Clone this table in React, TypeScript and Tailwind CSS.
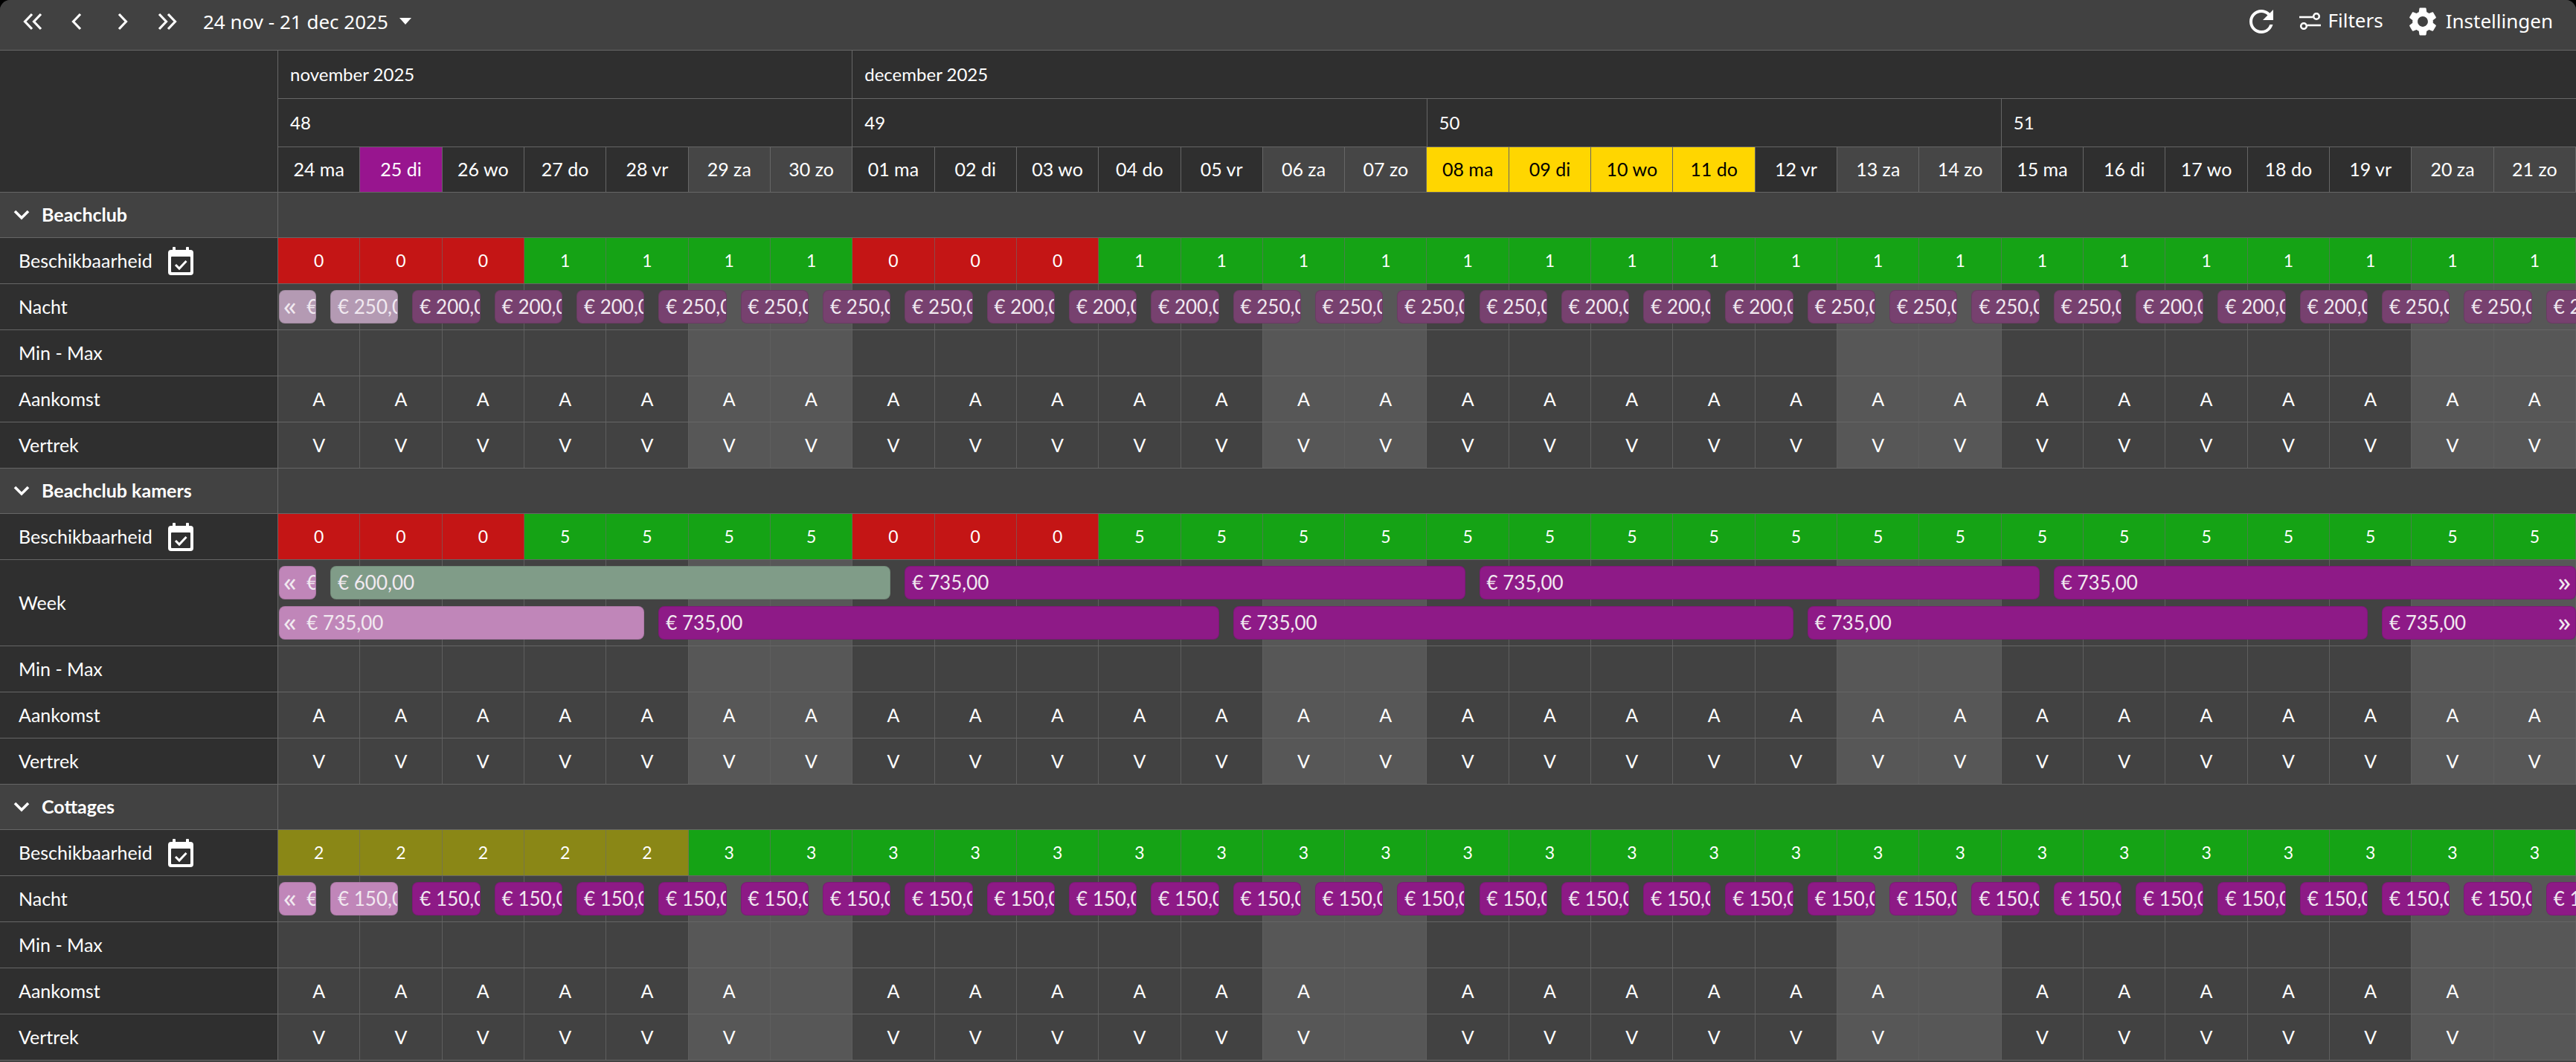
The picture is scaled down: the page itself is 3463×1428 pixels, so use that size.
import type { CSSProperties, ReactNode } from "react";
import { MdRefresh, MdSettings } from "react-icons/md";

const DAYS: [string, string][] = [
  ["24", "ma"], ["25", "di"], ["26", "wo"], ["27", "do"], ["28", "vr"], ["29", "za"], ["30", "zo"],
  ["01", "ma"], ["02", "di"], ["03", "wo"], ["04", "do"], ["05", "vr"], ["06", "za"], ["07", "zo"],
  ["08", "ma"], ["09", "di"], ["10", "wo"], ["11", "do"], ["12", "vr"], ["13", "za"], ["14", "zo"],
  ["15", "ma"], ["16", "di"], ["17", "wo"], ["18", "do"], ["19", "vr"], ["20", "za"], ["21", "zo"],
];

const TODAY = 1;
const HIGHLIGHT = [14, 15, 16, 17];

const isWeekend = (i: number) => DAYS[i][1] === "za" || DAYS[i][1] === "zo";
const isSunday = (i: number) => DAYS[i][1] === "zo";

const nightPrice = (i: number) => {
  const wd = DAYS[((i % 28) + 28) % 28][1];
  return wd === "di" || wd === "wo" || wd === "do" ? "€ 200,00" : "€ 250,00";
};

function Chevron({ dir }: { dir: "left" | "right" }) {
  return (
    <svg width="16" height="24" viewBox="0 0 16 24" fill="none" stroke="white" strokeWidth="3.2">
      {dir === "left" ? <path d="M13 2 L3.5 12 L13 22" /> : <path d="M3 2 L12.5 12 L3 22" />}
    </svg>
  );
}

function DoubleChevron({ dir }: { dir: "left" | "right" }) {
  return (
    <svg width="27" height="24" viewBox="0 0 27 24" fill="none" stroke="white" strokeWidth="3.2">
      {dir === "left" ? (
        <path d="M13 2 L3.5 12 L13 22 M25 2 L15.5 12 L25 22" />
      ) : (
        <path d="M2 2 L11.5 12 L2 22 M14 2 L23.5 12 L14 22" />
      )}
    </svg>
  );
}

function FiltersIcon() {
  return (
    <svg width="29" height="23" viewBox="0 0 29 23" fill="none" stroke="white" strokeWidth="2.6">
      <path d="M0 6 H18" />
      <circle cx="23" cy="5" r="3.8" />
      <circle cx="6" cy="18" r="3.8" />
      <path d="M10.5 17 H29" />
    </svg>
  );
}

function CalendarCheck() {
  return (
    <svg width="34" height="38" viewBox="0 0 34 38">
      <rect x="6" y="0" width="4" height="7" rx="1" fill="white" />
      <rect x="24" y="0" width="4" height="7" rx="1" fill="white" />
      <rect x="0" y="4" width="34" height="34" rx="4" fill="white" />
      <rect x="4" y="13" width="26" height="21" rx="1" fill="#2f2f2f" />
      <path d="M10 24 L15 29 L24.5 19" fill="none" stroke="white" strokeWidth="3" />
    </svg>
  );
}

function ChevronDown() {
  return (
    <svg width="22" height="14" viewBox="0 0 22 14" fill="none" stroke="white" strokeWidth="3.6">
      <path d="M2 2 L11 11 L20 2" />
    </svg>
  );
}

function Toolbar() {
  return (
    <div className="h-[68px] shrink-0 bg-[#414141] rounded-t-[14px] border-b border-[#666] flex items-center justify-between pb-[10px] font-['Noto_Sans',sans-serif] text-white">
      <div className="flex items-center pl-[30px]">
        <DoubleChevron dir="left" />
        <span className="ml-[38px]"><Chevron dir="left" /></span>
        <span className="ml-[46px]"><Chevron dir="right" /></span>
        <span className="ml-[39px]"><DoubleChevron dir="right" /></span>
        <span className="ml-[34px] text-[26px] leading-none">24 nov - 21 dec 2025</span>
        <span className="ml-[15px] w-0 h-0 border-l-[8px] border-r-[8px] border-t-[9px] border-l-transparent border-r-transparent border-t-white" />
      </div>
      <div className="flex items-center pr-[31px]">
        <MdRefresh size={48} />
        <span className="ml-[27px]"><FiltersIcon /></span>
        <span className="ml-[10px] text-[26px] leading-none -mt-[4px]">Filters</span>
        <span className="ml-[30px]"><MdSettings size={46} /></span>
        <span className="ml-[8px] text-[26px] leading-none -mt-[2px]">Instellingen</span>
      </div>
    </div>
  );
}

function Header() {
  return (
    <div className="flex shrink-0">
      <div className="w-[374px] shrink-0 bg-[#2f2f2f] border-r border-b border-[#666]" />
      <div className="flex-1 flex flex-col bg-[#2f2f2f] text-[24px]">
        <div className="h-[65px] grid grid-cols-[repeat(28,minmax(0,1fr))] border-b border-[#666]">
          <div className="col-span-7 flex items-center pl-[16px] border-r border-[#666]">november 2025</div>
          <div className="col-span-21 flex items-center pl-[16px]">december 2025</div>
        </div>
        <div className="h-[65px] grid grid-cols-[repeat(28,minmax(0,1fr))] border-b border-[#666]">
          {["48", "49", "50", "51"].map((w, i) => (
            <div key={w} className={`col-span-7 flex items-center pl-[16px] ${i < 3 ? "border-r border-[#666]" : ""}`}>
              {w}
            </div>
          ))}
        </div>
        <div className="h-[61px] grid grid-cols-[repeat(28,minmax(0,1fr))] border-b border-[#666] text-[25px]">
          {DAYS.map(([d, w], i) => {
            let bg = isWeekend(i) ? "bg-[#464646] text-white" : "bg-[#2f2f2f] text-white";
            if (i === TODAY) bg = "bg-[#98158f] text-white";
            if (HIGHLIGHT.includes(i)) bg = "bg-[#ffd600] text-black";
            return (
              <div key={i} className={`flex items-center justify-center border-r border-[#666] ${bg}`}>
                {d} {w}
              </div>
            );
          })}
        </div>
      </div>
    </div>
  );
}

function GroupRow({ title }: { title: string }) {
  return (
    <div className="flex h-[61px] shrink-0 bg-[#424242] border-b border-[#666]">
      <div className="w-[374px] shrink-0 border-r border-[#666] flex items-center gap-[16px] pl-[18px] text-[25px] font-bold">
        <ChevronDown />
        {title}
      </div>
      <div className="flex-1" />
    </div>
  );
}

function DataRow({
  label,
  icon,
  tall,
  cell,
  overlay,
}: {
  label: string;
  icon?: ReactNode;
  tall?: boolean;
  cell: (i: number) => ReactNode;
  overlay?: ReactNode;
}) {
  return (
    <div className={`flex shrink-0 border-b border-[#666] ${tall ? "h-[116px]" : "h-[62px]"}`}>
      <div className="w-[374px] shrink-0 flex items-center gap-[21px] pl-[25px] bg-[#2f2f2f] border-r border-[#666] text-[25px]">
        {label}
        {icon}
      </div>
      <div className="relative flex-1 overflow-hidden">
        <div className="grid h-full grid-cols-[repeat(28,minmax(0,1fr))]">{DAYS.map((_, i) => cell(i))}</div>
        {overlay}
      </div>
    </div>
  );
}

function DayCell({ i, text }: { i: number; text?: string }) {
  return (
    <div
      className={`flex items-center justify-center border-r border-[#5e5e5e] text-[25px] ${
        isWeekend(i) ? "bg-[#575757]" : "bg-[#424242]"
      }`}
    >
      {text}
    </div>
  );
}

function AvailCell({ value }: { value: number }) {
  const bg = value === 0 ? "bg-[#c41515]" : value === 2 ? "bg-[#8a8716]" : "bg-[#15a315]";
  return (
    <div className={`flex items-center justify-center border-r border-[#6b6b6b]/60 text-[23px] ${bg}`}>{value}</div>
  );
}

function Pill({
  s,
  e,
  top,
  color,
  text,
  clampRight,
}: {
  s: number;
  e: number;
  top: number;
  color: string;
  text: string;
  clampRight?: boolean;
}) {
  const clampLeft = s < 0;
  const style: CSSProperties = { top, backgroundColor: color };
  if (clampLeft) {
    style.left = "1px";
    style.width = `calc(${e} * 100% / 28 + 50px)`;
  } else {
    style.left = `calc(${s} * 100% / 28 + 70px)`;
    if (clampRight) style.right = "0px";
    else style.width = `calc(${e - s} * 100% / 28 - 19px)`;
  }
  return (
    <div
      className="absolute h-[45px] rounded-[8px] overflow-hidden whitespace-nowrap flex items-center text-[26px] text-[#f1e9f0] border border-black/10"
      style={style}
    >
      {clampLeft && (
        <span className="shrink-0 pl-[5px] mr-[14px] -mt-[3px] text-[34px] leading-none font-['Noto_Sans',sans-serif]">«</span>
      )}
      <span className={`shrink-0 ${clampLeft ? "" : "pl-[9px]"}`}>{text}</span>
      {clampRight && (
        <span className="shrink-0 ml-auto pr-[6px] -mt-[3px] text-[34px] leading-none font-['Noto_Sans',sans-serif]">»</span>
      )}
    </div>
  );
}

function NightPills({ past, future, price }: { past: string; future: string; price: (i: number) => string }) {
  const items = [];
  for (let i = -1; i < 28; i++) {
    items.push(<Pill key={i} s={i} e={i + 1} top={8} color={i < TODAY ? past : future} text={price(i)} />);
  }
  return <>{items}</>;
}

function WeekBars() {
  const purple = "#8e1a87";
  const pink = "#c086b9";
  return (
    <>
      <Pill s={-7} e={0} top={8} color={pink} text="€ 735,00" />
      <Pill s={0} e={7} top={8} color="#809c88" text="€ 600,00" />
      <Pill s={7} e={14} top={8} color={purple} text="€ 735,00" />
      <Pill s={14} e={21} top={8} color={purple} text="€ 735,00" />
      <Pill s={21} e={28} top={8} color={purple} text="€ 735,00" clampRight />
      <Pill s={-3} e={4} top={62} color={pink} text="€ 735,00" />
      <Pill s={4} e={11} top={62} color={purple} text="€ 735,00" />
      <Pill s={11} e={18} top={62} color={purple} text="€ 735,00" />
      <Pill s={18} e={25} top={62} color={purple} text="€ 735,00" />
      <Pill s={25} e={32} top={62} color={purple} text="€ 735,00" clampRight />
    </>
  );
}

const beachAvail = DAYS.map((_, i) => ([0, 1, 2, 7, 8, 9].includes(i) ? 0 : 1));
const kamersAvail = DAYS.map((_, i) => ([0, 1, 2, 7, 8, 9].includes(i) ? 0 : 5));
const cottageAvail = DAYS.map((_, i) => (i < 5 ? 2 : 3));

export default function App() {
  return (
    <div className="h-screen w-full overflow-hidden bg-black font-[Lato,sans-serif] text-white">
      <div className="h-full flex flex-col bg-[#424242] rounded-t-[14px]">
        <Toolbar />
        <Header />

        <GroupRow title="Beachclub" />
        <DataRow label="Beschikbaarheid" icon={<CalendarCheck />} cell={(i) => <AvailCell key={i} value={beachAvail[i]} />} />
        <DataRow
          label="Nacht"
          cell={(i) => <DayCell key={i} i={i} />}
          overlay={<NightPills past="#b49ab3" future="#77416f" price={nightPrice} />}
        />
        <DataRow label="Min - Max" cell={(i) => <DayCell key={i} i={i} />} />
        <DataRow label="Aankomst" cell={(i) => <DayCell key={i} i={i} text="A" />} />
        <DataRow label="Vertrek" cell={(i) => <DayCell key={i} i={i} text="V" />} />

        <GroupRow title="Beachclub kamers" />
        <DataRow label="Beschikbaarheid" icon={<CalendarCheck />} cell={(i) => <AvailCell key={i} value={kamersAvail[i]} />} />
        <DataRow label="Week" tall cell={(i) => <DayCell key={i} i={i} />} overlay={<WeekBars />} />
        <DataRow label="Min - Max" cell={(i) => <DayCell key={i} i={i} />} />
        <DataRow label="Aankomst" cell={(i) => <DayCell key={i} i={i} text="A" />} />
        <DataRow label="Vertrek" cell={(i) => <DayCell key={i} i={i} text="V" />} />

        <GroupRow title="Cottages" />
        <DataRow label="Beschikbaarheid" icon={<CalendarCheck />} cell={(i) => <AvailCell key={i} value={cottageAvail[i]} />} />
        <DataRow
          label="Nacht"
          cell={(i) => <DayCell key={i} i={i} />}
          overlay={<NightPills past="#c086b9" future="#8d1a86" price={() => "€ 150,00"} />}
        />
        <DataRow label="Min - Max" cell={(i) => <DayCell key={i} i={i} />} />
        <DataRow label="Aankomst" cell={(i) => <DayCell key={i} i={i} text={isSunday(i) ? "" : "A"} />} />
        <DataRow label="Vertrek" cell={(i) => <DayCell key={i} i={i} text={isSunday(i) ? "" : "V"} />} />
      </div>
    </div>
  );
}
